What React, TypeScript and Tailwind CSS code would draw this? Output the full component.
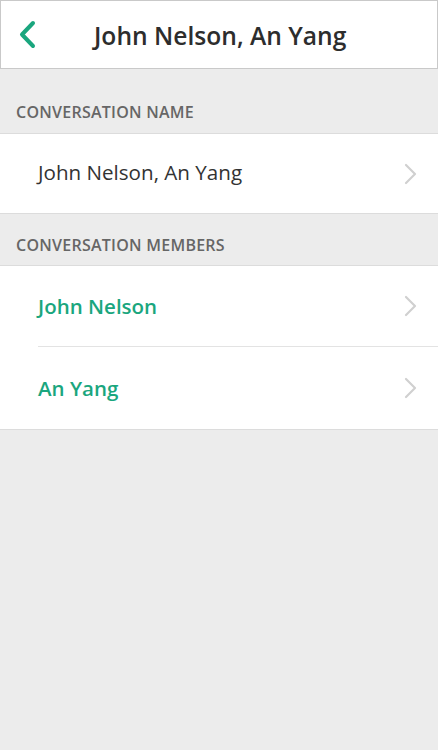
import { useState } from "react";

function Chevron() {
  return (
    <svg width="14" height="22" viewBox="0 0 14 22" className="shrink-0">
      <path d="M2 2 L11 11 L2 20" fill="none" stroke="#d0d0d0" strokeWidth="2.2" strokeLinecap="round" strokeLinejoin="round" />
    </svg>
  );
}

export default function App() {
  const members = ["John Nelson", "An Yang"];
  const [name] = useState("John Nelson, An Yang");

  return (
    <div className="w-[438px] h-[750px] bg-[#ececec] flex flex-col font-['Open_Sans',sans-serif]">
      {/* HEADER */}
      <div className="h-[69px] bg-white border border-[#c9c9c9] flex items-center shrink-0">
        <div className="w-[93px] pl-[16px] flex items-center">
          <svg width="22" height="32" viewBox="0 0 22 32">
            <path d="M16 4 L5 15.5 L16 27" fill="none" stroke="#1aa67e" strokeWidth="4" strokeLinecap="round" strokeLinejoin="round" />
          </svg>
        </div>
        <span className="text-[24.6px] font-semibold text-[#2d2d2d] leading-none pt-[4px]">{name}</span>
      </div>

      {/* CONVERSATION NAME */}
      <div className="h-[64px] flex items-end pl-[16px] pb-[10px] shrink-0">
        <span className="text-[16px] font-semibold text-[#666] leading-[22px] tracking-[0.25px]">CONVERSATION NAME</span>
      </div>
      <div className="h-[81px] bg-white border-y border-[#dcdcdc] flex items-center justify-between pl-[38px] pr-[20px] shrink-0">
        <span className="text-[20.6px] text-[#333] leading-none pb-[2px]">{name}</span>
        <Chevron />
      </div>

      {/* CONVERSATION MEMBERS */}
      <div className="h-[51px] flex items-end pl-[16px] pb-[9px] shrink-0">
        <span className="text-[16px] font-semibold text-[#666] leading-[22px] tracking-[0.25px]">CONVERSATION MEMBERS</span>
      </div>
      <div className="bg-white border-y border-[#dcdcdc] shrink-0">
        {members.map((m, i) => (
          <div key={m} className="pl-[38px]">
            <div
              className={`h-[81px] flex items-center justify-between pr-[20px] ${
                i < members.length - 1 ? "border-b border-[#e3e3e3]" : "h-[82px]"
              }`}
            >
              <span className="text-[20.5px] font-semibold text-[#1aa67e] leading-none pt-[1px]">{m}</span>
              <Chevron />
            </div>
          </div>
        ))}
      </div>
    </div>
  );
}
